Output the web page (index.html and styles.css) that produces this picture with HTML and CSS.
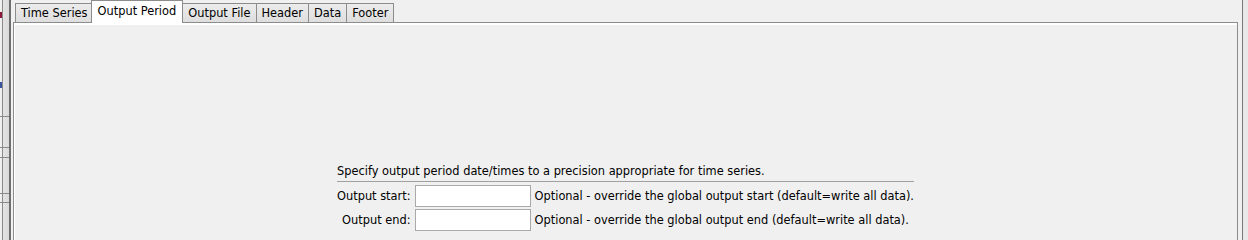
FILE: index.html
```html
<!DOCTYPE html>
<html lang="en">
<head>
    <meta charset="UTF-8">
    <title>Output Period</title>
    <link rel="stylesheet" href="styles.css">
</head>
<body>
    <div class="side-left">
        <span class="mark mark-red"></span>
        <span class="mark mark-blue"></span>
        <span class="tick" style="top: 116px"></span>
        <span class="tick" style="top: 147px"></span>
        <span class="tick" style="top: 157px"></span>
        <span class="tick" style="top: 193px"></span>
        <span class="tick" style="top: 202px"></span>
    </div>

    <div class="tabpane">
        <div class="tabs">
            <div class="tab">Time Series</div>
            <div class="tab selected">Output Period</div>
            <div class="tab">Output File</div>
            <div class="tab">Header</div>
            <div class="tab">Data</div>
            <div class="tab">Footer</div>
        </div>

        <div class="panel">
            <div class="form">
                <div class="intro">Specify output period date/times to a precision appropriate for time series.</div>

                <label class="label" for="output-start">Output start:</label>
                <input class="field" id="output-start" type="text">
                <div class="desc">Optional - override the global output start (default=write all data).</div>

                <label class="label" for="output-end">Output end:</label>
                <input class="field" id="output-end" type="text">
                <div class="desc">Optional - override the global output end (default=write all data).</div>
            </div>
        </div>
    </div>

    <div class="side-right"></div>
</body>
</html>
```

FILE: styles.css
```css
* {
    margin: 0;
    padding: 0;
    box-sizing: border-box;
}

body {
    font-family: "DejaVu Sans", sans-serif;
    font-size: 11.4px;
    color: #000000;
    background: #f0f0f0;
    display: flex;
    height: 240px;
    overflow: hidden;
}

/* left strip, part of the neighbouring panel */
.side-left {
    position: relative;
    width: 11px;
    flex-shrink: 0;
    margin-right: 2px;
    border-right: 2px solid #6f6f6f;
    background: linear-gradient(to right, #f0f0f0 0, #f0f0f0 2px, #8a8a8a 2px, #8a8a8a 3px, #e4e4e4 3px, #dadada 9px);
}

.mark {
    position: absolute;
    left: 0;
    width: 2px;
    height: 6px;
}

.mark-red {
    top: 12px;
    background: #8b1a3a;
}

.mark-blue {
    top: 82px;
    background: #3a55a0;
}

.tick {
    position: absolute;
    left: 0;
    width: 9px;
    height: 1px;
    background: #8a8a8a;
}

.tabpane {
    flex: 1;
    display: flex;
    flex-direction: column;
}

.tabs {
    display: flex;
    align-items: flex-end;
    height: 22px;
    padding-left: 2px;
}

.tab {
    height: 19px;
    padding: 0 5px;
    line-height: 18px;
    border: 1px solid #8c8c8c;
    border-bottom: none;
    margin-right: -1px;
    background: linear-gradient(#ececec, #dedede);
}

.tab.selected {
    position: relative;
    z-index: 1;
    height: 23px;
    margin: 0 -1px -1px -2px;
    padding: 0 6px;
    line-height: 21px;
    background: #ffffff;
}

.panel {
    flex: 1;
    display: flex;
    justify-content: center;
    padding-top: 141px;
    border: 1px solid #8c8c8c;
    border-bottom: none;
    box-shadow: inset 1px 2px 0 #ffffff;
}

.form {
    display: grid;
    grid-template-columns: auto 116px auto;
    grid-auto-rows: min-content;
    column-gap: 4px;
    row-gap: 2px;
}

.intro {
    grid-column: 1 / -1;
    padding-bottom: 3px;
    border-bottom: 1px solid #a0a0a0;
    margin-bottom: 1px;
}

.label {
    align-self: center;
    text-align: right;
}

.field {
    width: 116px;
    height: 22px;
    border: 1px solid #a9a9a9;
    background: #ffffff;
    font: inherit;
}

.desc {
    align-self: center;
}

.side-right {
    width: 6px;
    flex-shrink: 0;
    margin-left: 4px;
    border-left: 1px solid #7a7a7a;
    background: #e8e8e8;
}
```
